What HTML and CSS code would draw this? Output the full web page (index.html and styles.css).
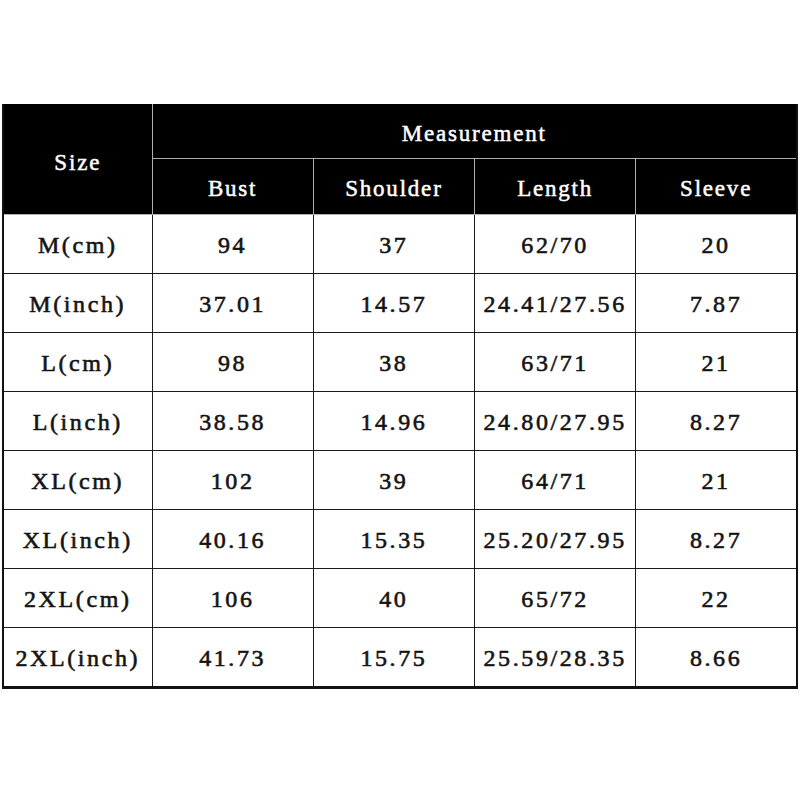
FILE: index.html
```html
<!DOCTYPE html>
<html>
<head>
<meta charset="utf-8">
<link rel="stylesheet" href="styles.css">
</head>
<body>
<table class="size-table">
  <colgroup>
    <col class="col-size">
    <col><col><col><col>
  </colgroup>
  <thead>
    <tr class="head-top">
      <th rowspan="2" class="size-head">Size</th>
      <th colspan="4">Measurement</th>
    </tr>
    <tr class="head-sub">
      <th>Bust</th><th>Shoulder</th><th>Length</th><th>Sleeve</th>
    </tr>
  </thead>
  <tbody>
    <tr><td>M(cm)</td><td>94</td><td>37</td><td>62/70</td><td>20</td></tr>
    <tr><td>M(inch)</td><td>37.01</td><td>14.57</td><td>24.41/27.56</td><td>7.87</td></tr>
    <tr><td>L(cm)</td><td>98</td><td>38</td><td>63/71</td><td>21</td></tr>
    <tr><td>L(inch)</td><td>38.58</td><td>14.96</td><td>24.80/27.95</td><td>8.27</td></tr>
    <tr><td>XL(cm)</td><td>102</td><td>39</td><td>64/71</td><td>21</td></tr>
    <tr><td>XL(inch)</td><td>40.16</td><td>15.35</td><td>25.20/27.95</td><td>8.27</td></tr>
    <tr><td>2XL(cm)</td><td>106</td><td>40</td><td>65/72</td><td>22</td></tr>
    <tr><td>2XL(inch)</td><td>41.73</td><td>15.75</td><td>25.59/28.35</td><td>8.66</td></tr>
  </tbody>
</table>
</body>
</html>
```
FILE: styles.css
```css
html, body {
  margin: 0;
  padding: 0;
  background: #ffffff;
}
body {
  padding: 104px 0 0 2px;
  font-family: "Liberation Serif", "Times New Roman", serif;
}
.size-table {
  border-collapse: collapse;
  table-layout: fixed;
  width: 796px;
  border-left: 2px solid #111;
  border-right: 2px solid #111;
  border-bottom: 3px solid #111;
}
.col-size {
  width: 149px;
}
.size-table th {
  background: #000;
  color: #fff;
  font-weight: normal;
  -webkit-text-stroke: 0.5px #fff;
  font-size: 23px;
  letter-spacing: 1.8px;
  text-align: center;
  border: 1px solid #b0b0b0;
  border-top: none;
  padding: 0;
}
.size-table th.size-head {
  border-left: none;
  padding-top: 7px;
}
.head-top th {
  height: 48px;
  padding-top: 6px;
}
.head-sub th {
  height: 51px;
  padding-top: 4px;
}
.size-table td {
  height: 56px;
  border: 1px solid #1a1a1a;
  color: #141414;
  font-weight: normal;
  -webkit-text-stroke: 0.6px #141414;
  font-size: 24px;
  letter-spacing: 2.6px;
  text-align: center;
  padding: 2px 0 0;
  white-space: nowrap;
}
```
